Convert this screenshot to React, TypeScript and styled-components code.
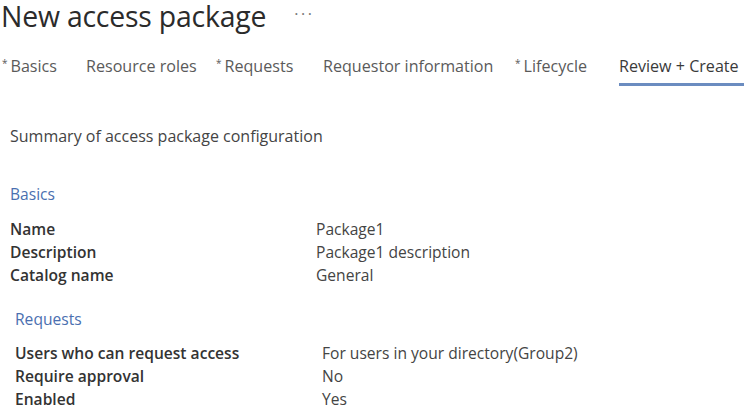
import React from "react";
import styled, { createGlobalStyle } from "styled-components";

const Global = createGlobalStyle`
  html, body { margin: 0; padding: 0; background: #fff; }
  body { font-family: "Open Sans", "Noto Sans", "Liberation Sans", sans-serif; color: #333; }
`;

const Page = styled.div`
  width: 744px;
  height: 408px;
  overflow: hidden;
  display: flex;
  flex-direction: column;
`;

const Header = styled.div`
  display: flex;
  align-items: center;
  gap: 28px;
  height: 32px;
  padding-left: 1px;
`;

const Title = styled.h1`
  margin: 0;
  font-size: 28.4px;
  font-weight: 400;
  color: #2b2b2b;
  line-height: 32px;
  letter-spacing: -0.2px;
`;

const More = styled.span`
  font-size: 16px;
  line-height: 16px;
  color: #777;
  letter-spacing: 2.5px;
  margin-top: -5px;
`;

const Tabs = styled.div`
  display: flex;
  margin-top: 20px;
  padding-left: 2px;
`;

const Tab = styled.div<{ $active?: boolean; $w: number }>`
  width: ${(p) => p.$w}px;
  flex: none;
  font-size: 16.1px;
  line-height: 22px;
  color: ${(p) => (p.$active ? "#3a3a3a" : "#5a5a5a")};
  height: 34px;
  box-sizing: border-box;
  padding-top: 3px;
  border-bottom: 3px solid ${(p) => (p.$active ? "#6b8cc0" : "transparent")};
  white-space: nowrap;
`;

const Star = styled.span`
  display: inline-block;
  font-size: 10px;
  line-height: 0;
  vertical-align: 5px;
  margin-right: 3px;
`;

const Summary = styled.div`
  margin-top: 40px;
  padding-left: 10px;
  font-size: 16px;
  line-height: 21px;
  color: #444;
`;

const Section = styled.div<{ $indent: number; $gap: number }>`
  padding-left: ${(p) => p.$indent}px;
  margin-top: ${(p) => p.$gap}px;
  display: flex;
  flex-direction: column;
`;

const SectionTitle = styled.div<{ $after: number }>`
  font-size: 15.6px;
  line-height: 21px;
  color: #4a6fb0;
  margin-bottom: ${(p) => p.$after}px;
`;

const Row = styled.div<{ $col: number }>`
  display: grid;
  grid-template-columns: ${(p) => p.$col}px 1fr;
  height: 23px;
  align-items: center;
  font-size: 15.6px;
  line-height: 21px;
`;

const Label = styled.span`
  font-weight: 600;
  color: #333;
`;

const Value = styled.span`
  color: #444;
`;

const tabs = [
  { label: "Basics", req: true, w: 84 },
  { label: "Resource roles", req: false, w: 130 },
  { label: "Requests", req: true, w: 107 },
  { label: "Requestor information", req: false, w: 192 },
  { label: "Lifecycle", req: true, w: 104 },
  { label: "Review + Create", req: false, w: 125, active: true },
];

export default function App() {
  return (
    <Page>
      <Global />
      <Header>
        <Title>New access package</Title>
        <More>···</More>
      </Header>
      <Tabs>
        {tabs.map((t) => (
          <Tab key={t.label} $w={t.w} $active={t.active}>
            {t.req && <Star>*</Star>}
            {t.label}
          </Tab>
        ))}
      </Tabs>
      <Summary>Summary of access package configuration</Summary>
      <Section $indent={10} $gap={37}>
        <SectionTitle $after={13}>Basics</SectionTitle>
        <Row $col={306}><Label>Name</Label><Value>Package1</Value></Row>
        <Row $col={306}><Label>Description</Label><Value>Package1 description</Value></Row>
        <Row $col={306}><Label>Catalog name</Label><Value>General</Value></Row>
      </Section>
      <Section $indent={15} $gap={22}>
        <SectionTitle $after={12}>Requests</SectionTitle>
        <Row $col={307}><Label>Users who can request access</Label><Value>For users in your directory(Group2)</Value></Row>
        <Row $col={307}><Label>Require approval</Label><Value>No</Value></Row>
        <Row $col={307}><Label>Enabled</Label><Value>Yes</Value></Row>
      </Section>
    </Page>
  );
}
